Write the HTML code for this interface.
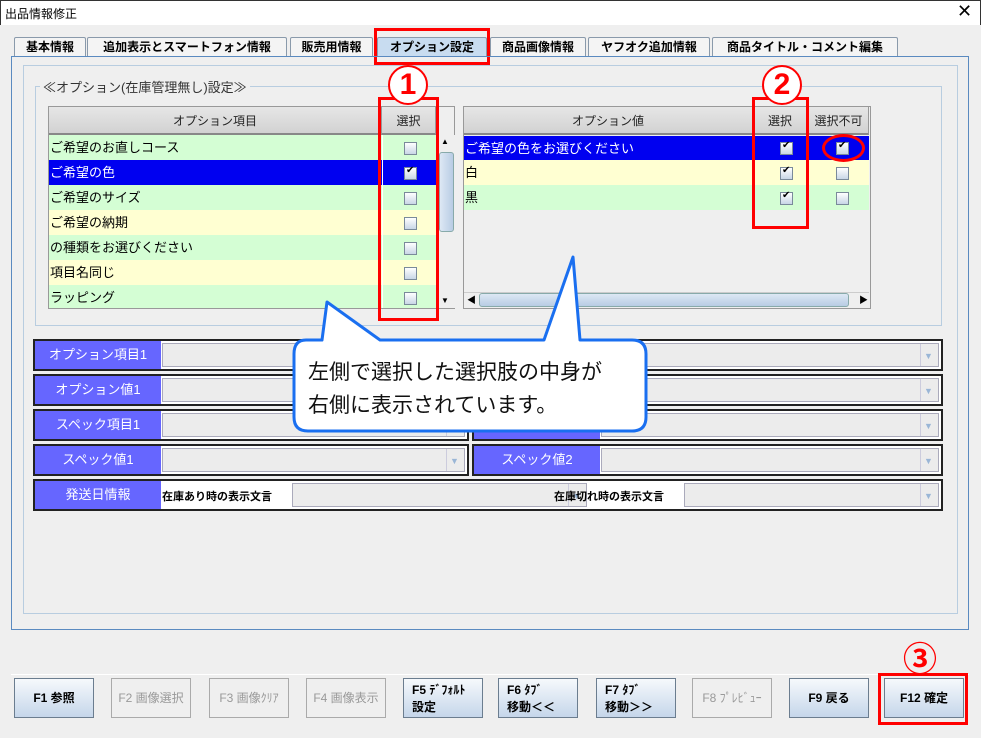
<!DOCTYPE html>
<html><head><meta charset="utf-8"><style>
*{box-sizing:border-box;margin:0;padding:0}
body{width:981px;height:738px;position:relative;overflow:hidden;background:#efefef;font-family:"Liberation Sans","Noto Sans CJK JP",sans-serif;font-size:12px;color:#000}
.a{position:absolute}
.tab{position:absolute;top:37px;height:20px;border:1px solid #8a9aab;border-bottom:none;background:#f4f4f4;font-weight:bold;font-size:12px;text-align:center;line-height:18px;border-radius:2px 2px 0 0}
.hdr{position:absolute;height:28px;background:linear-gradient(#e6e6e6,#d2d2d2);border-right:1px solid #999;border-bottom:2px solid #888;text-align:center;line-height:28px;font-size:12px;color:#222}
.row{position:absolute;height:25px;line-height:25px;font-size:13px;padding-left:1px;white-space:nowrap}
.g{background:#d4fed4}.y{background:#ffffd2}.b{background:#0000f0;color:#fff}
.cb{position:absolute;width:13px;height:13px;border:1px solid #7a8a9a;background:linear-gradient(#fff,#c9d6e6)}
.cb.c::after{content:"✔";position:absolute;left:1px;top:-3px;font-size:10px;color:#000}
.red{position:absolute;border:3px solid #f00}
.circ{position:absolute;width:40px;height:40px;border-radius:50%;border:2px solid #f00;background:#fff;color:#f00;font-weight:bold;font-size:30px;text-align:center;line-height:36px}
.frow{position:absolute;border:2px solid #222;background:#fff}
.lab{position:absolute;top:0;height:100%;background:#6666ff;color:#fff;font-size:13px;text-align:center;line-height:26px}
.fld{position:absolute;top:2px;bottom:2px;border:1px solid #aab;background:#ececec}
.fld::after{content:"▼";position:absolute;right:2px;top:0;bottom:0;width:15px;border-left:1px solid #ccd;color:#9ab6d6;font-size:9px;line-height:24px;text-align:center}
.btn{position:absolute;top:678px;width:80px;height:40px;border:1px solid #6b7d8f;background:linear-gradient(#f6f9fc,#c5d6ea);font-size:12px;font-weight:bold;text-align:center;line-height:38px}
.btn.d{background:#efefef;border-color:#aaa;color:#999;font-weight:normal}
.btn.t{line-height:17px;padding-top:3px;text-align:left;padding-left:8px}
</style></head><body>
<div class="a" style="left:0;top:0;width:981px;height:25px;background:#fff;border:1px solid #333;border-bottom:none"></div>
<div class="a" style="left:5px;top:5px;font-size:12px">出品情報修正</div>
<div class="a" style="left:957px;top:1px;font-size:18px">✕</div>

<div class="tab" style="left:14px;width:72px">基本情報</div>
<div class="tab" style="left:87px;width:200px">追加表示とスマートフォン情報</div>
<div class="tab" style="left:290px;width:83px">販売用情報</div>
<div class="tab" style="left:377px;width:110px;background:#c8dcf0">オプション設定</div>
<div class="tab" style="left:490px;width:96px">商品画像情報</div>
<div class="tab" style="left:588px;width:122px">ヤフオク追加情報</div>
<div class="tab" style="left:712px;width:186px">商品タイトル・コメント編集</div>
<div class="red" style="left:374px;top:28px;width:116px;height:37px"></div>

<div class="a" style="left:11px;top:56px;width:958px;height:574px;border:1px solid #5a8ac0"></div>
<div class="a" style="left:23px;top:65px;width:935px;height:549px;border:1px solid #b8cde0"></div>
<div class="a" style="left:35px;top:86px;width:907px;height:240px;border:1px solid #b8cde0"></div>
<div class="a" style="left:40px;top:77px;background:#efefef;padding:0 3px;font-size:13px;color:#333">≪オプション(在庫管理無し)設定≫</div>

<!-- left table -->
<div class="a" style="left:48px;top:106px;width:407px;height:203px;border:1px solid #999;background:#efefef"></div>
<div class="hdr" style="left:49px;top:107px;width:333px">オプション項目</div>
<div class="hdr" style="left:382px;top:107px;width:54px">選択</div>
<div class="row g" style="left:49px;top:135px;width:387px">ご希望のお直しコース</div>
<div class="row b" style="left:49px;top:160px;width:387px">ご希望の色</div>
<div class="row g" style="left:49px;top:185px;width:387px">ご希望のサイズ</div>
<div class="row y" style="left:49px;top:210px;width:387px">ご希望の納期</div>
<div class="row g" style="left:49px;top:235px;width:387px">の種類をお選びください</div>
<div class="row y" style="left:49px;top:260px;width:387px">項目名同じ</div>
<div class="row g" style="left:49px;top:285px;width:387px;height:23px">ラッピング</div>
<div class="a" style="left:382px;top:135px;width:1px;height:173px;background:#fff"></div>
<div class="cb" style="left:404px;top:142px"></div>
<div class="cb c" style="left:404px;top:167px"></div>
<div class="cb" style="left:404px;top:192px"></div>
<div class="cb" style="left:404px;top:217px"></div>
<div class="cb" style="left:404px;top:242px"></div>
<div class="cb" style="left:404px;top:267px"></div>
<div class="cb" style="left:404px;top:292px"></div>
<div class="a" style="left:437px;top:135px;width:18px;height:173px;background:#efefef;border-left:1px solid #ccc"></div>
<div class="a" style="left:441px;top:137px;font-size:8px">▲</div>
<div class="a" style="left:439px;top:152px;width:15px;height:80px;border:1px solid #8aa;border-radius:3px;background:linear-gradient(90deg,#dde8f4,#b8cce4)"></div>
<div class="a" style="left:441px;top:296px;font-size:8px">▼</div>

<!-- right table -->
<div class="a" style="left:463px;top:106px;width:408px;height:203px;border:1px solid #999;background:#efefef"></div>
<div class="hdr" style="left:464px;top:107px;width:289px">オプション値</div>
<div class="hdr" style="left:753px;top:107px;width:55px">選択</div>
<div class="hdr" style="left:809px;top:107px;width:60px">選択不可</div>
<div class="row b" style="left:464px;top:136px;width:405px">ご希望の色をお選びください</div>
<div class="row y" style="left:464px;top:160px;width:405px">白</div>
<div class="row g" style="left:464px;top:185px;width:405px">黒</div>
<div class="a" style="left:753px;top:136px;width:1px;height:24px;background:#fff"></div>
<div class="a" style="left:808px;top:136px;width:1px;height:74px;background:#fff"></div>
<div class="cb c" style="left:780px;top:142px"></div>
<div class="cb c" style="left:780px;top:167px"></div>
<div class="cb c" style="left:780px;top:192px"></div>
<div class="cb c" style="left:836px;top:142px"></div>
<div class="cb" style="left:836px;top:167px"></div>
<div class="cb" style="left:836px;top:192px"></div>
<div class="a" style="left:464px;top:292px;width:405px;height:16px;background:#efefef;border-top:1px solid #ccc"></div>
<div class="a" style="left:467px;top:293px;font-size:9px">◀</div>
<div class="a" style="left:479px;top:293px;width:370px;height:14px;border:1px solid #8aa;border-radius:3px;background:linear-gradient(#dde8f4,#b8cce4)"></div>
<div class="a" style="left:859px;top:293px;font-size:9px">▶</div>

<div class="red" style="left:378px;top:97px;width:61px;height:224px"></div>
<div class="circ" style="left:388px;top:65px">1</div>
<div class="red" style="left:752px;top:97px;width:57px;height:132px"></div>
<div class="circ" style="left:762px;top:65px">2</div>
<div class="a" style="left:822px;top:134px;width:43px;height:28px;border:3px solid #f00;border-radius:50%"></div>

<!-- form -->
<div class="frow" style="left:33px;top:339px;width:910px;height:32px"><div class="lab" style="left:0;width:126px;line-height:28px">オプション項目1</div><div class="fld" style="left:127px;right:2px"></div></div>
<div class="frow" style="left:33px;top:374px;width:910px;height:32px"><div class="lab" style="left:0;width:126px;line-height:28px">オプション値1</div><div class="fld" style="left:127px;right:2px"></div></div>
<div class="frow" style="left:33px;top:409px;width:436px;height:32px"><div class="lab" style="left:0;width:126px;line-height:28px">スペック項目1</div><div class="fld" style="left:127px;right:2px"></div></div>
<div class="frow" style="left:472px;top:409px;width:471px;height:32px"><div class="lab" style="left:0;width:126px;line-height:28px">スペック項目2</div><div class="fld" style="left:127px;right:2px"></div></div>
<div class="frow" style="left:33px;top:444px;width:436px;height:32px"><div class="lab" style="left:0;width:126px;line-height:28px">スペック値1</div><div class="fld" style="left:127px;right:2px"></div></div>
<div class="frow" style="left:472px;top:444px;width:471px;height:32px"><div class="lab" style="left:0;width:126px;line-height:28px">スペック値2</div><div class="fld" style="left:127px;right:2px"></div></div>
<div class="frow" style="left:33px;top:479px;width:910px;height:32px"><div class="lab" style="left:0;width:126px;line-height:28px">発送日情報</div>
<div class="a" style="left:127px;top:7px;font-size:11px;font-weight:bold">在庫あり時の表示文言</div><div class="fld" style="left:257px;width:295px"></div>
<div class="a" style="left:519px;top:7px;font-size:11px;font-weight:bold">在庫切れ時の表示文言</div><div class="fld" style="left:649px;right:2px"></div></div>

<!-- bubble -->
<svg class="a" style="left:280px;top:245px" width="380" height="200">
<path d="M26 95 H 42 L 47 57 L 100 95 H 264 L 293 12 L 300 95 H 352 Q 366 95 366 109 V 172 Q 366 186 352 186 H 28 Q 14 186 14 172 V 109 Q 14 95 26 95 Z" fill="#fff" stroke="#1a6ff0" stroke-width="3" stroke-linejoin="round"/>
</svg>
<div class="a" style="left:308px;top:356px;font-size:21px;line-height:33px;color:#111">左側で選択した選択肢の中身が<br>右側に表示されています。</div>

<!-- bottom -->
<div class="a" style="left:11px;top:674px;width:958px;height:1px;background:#fff"></div>
<div class="btn" style="left:14px">F1 参照</div>
<div class="btn d" style="left:111px">F2 画像選択</div>
<div class="btn d" style="left:209px">F3 画像ｸﾘｱ</div>
<div class="btn d" style="left:306px">F4 画像表示</div>
<div class="btn t" style="left:403px">F5 ﾃﾞﾌｫﾙﾄ<br>設定</div>
<div class="btn t" style="left:498px">F6 ﾀﾌﾞ<br>移動＜＜</div>
<div class="btn t" style="left:596px">F7 ﾀﾌﾞ<br>移動＞＞</div>
<div class="btn d" style="left:692px">F8 ﾌﾟﾚﾋﾞｭｰ</div>
<div class="btn" style="left:789px">F9 戻る</div>
<div class="btn" style="left:884px">F12 確定</div>
<div class="red" style="left:878px;top:673px;width:90px;height:52px"></div>
<div class="circ" style="left:900px;top:642px;border:none;background:transparent;font-size:34px">③</div>
</body></html>
